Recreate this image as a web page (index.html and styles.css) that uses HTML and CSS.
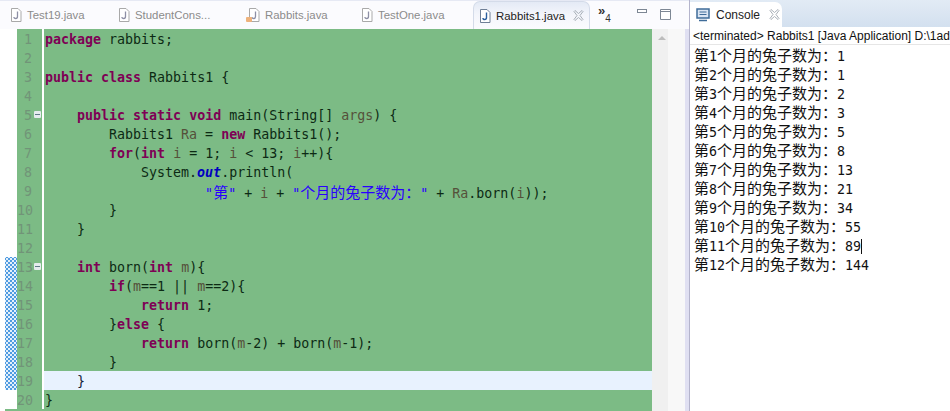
FILE: index.html
```html
<!DOCTYPE html>
<html lang="zh">
<head>
<meta charset="utf-8">
<title>Rabbits1.java</title>
<link rel="stylesheet" href="styles.css">
</head>
<body>
<svg class="defs" width="0" height="0" aria-hidden="true">
  <symbol id="jfile" viewBox="0 0 12 14">
    <path d="M1.5 .5h6.500l3 3v10h-9.500z" fill="#fff" stroke="#a9a9a9"/>
    <path d="M7.500 3.500v5q0 2-1.800 2t-1.700-1.500" fill="none" stroke="#8d8fa5" stroke-width="1.300"/>
  </symbol>
</svg>
<main class="workbench">
  <section class="editor-pane">
    <div class="tabbar">
      <div class="tab t1"><svg class="ficon"><use href="#jfile"/></svg>Test19.java</div>
      <div class="tab t2"><svg class="ficon"><use href="#jfile"/></svg>StudentCons...</div>
      <div class="tab t3"><span class="warnwrap"><svg class="ficon"><use href="#jfile"/></svg><span class="warndot"></span></span>Rabbits.java</div>
      <div class="tab t4"><svg class="ficon"><use href="#jfile"/></svg>TestOne.java</div>
      <div class="tab active">
        <svg class="ficon" viewBox="0 0 12 14"><path d="M1.500 .5h6.500l3 3v10h-9.500z" fill="#fff" stroke="#6f7f96"/><path d="M7.500 3.500v5q0 2-1.800 2t-1.700-1.500" fill="none" stroke="#2b5f9e" stroke-width="1.400"/></svg>
        <span class="tab-name">Rabbits1.java</span>
        <svg class="close" viewBox="0 0 11 11"><path d="M1 1.500l1-1 3.500 3 3.500-3 1 1-3 4 3 4-1 1-3.500-3-3.500 3-1-1 3-4z" fill="none" stroke="#a9b0b8"/></svg>
      </div>
      <div class="overflow"><span class="chev">»</span><span class="count">4</span></div>
      <div class="winbtns">
        <svg class="minbtn" viewBox="0 0 10 5"><rect x=".5" y=".5" width="9" height="3" fill="#fff" stroke="#7d8794"/></svg>
        <svg class="maxbtn" viewBox="0 0 11 11"><path d="M.5.5h10v10h-10zM.5 2.500h10" fill="#fff" stroke="#7d8794"/></svg>
      </div>
    </div>
    <div class="editor-body">
      <div class="code">
        <div class="row"><span class="mark"></span><span class="ln">1</span><pre class="src"><b>package</b> rabbits;</pre></div>
        <div class="row"><span class="mark"></span><span class="ln">2</span><pre class="src"></pre></div>
        <div class="row"><span class="mark"></span><span class="ln">3</span><pre class="src"><b>public</b> <b>class</b> Rabbits1 {</pre></div>
        <div class="row"><span class="mark"></span><span class="ln">4</span><pre class="src"></pre></div>
        <div class="row"><span class="mark"></span><span class="ln fold">5</span><pre class="src">    <b>public</b> <b>static</b> <b>void</b> main(String[] <i>args</i>) {</pre></div>
        <div class="row"><span class="mark"></span><span class="ln">6</span><pre class="src">        Rabbits1 <i>Ra</i> = <b>new</b> Rabbits1();</pre></div>
        <div class="row"><span class="mark"></span><span class="ln">7</span><pre class="src">        <b>for</b>(<b>int</b> <i>i</i> = 1; <i>i</i> &lt; 13; <i>i</i>++){</pre></div>
        <div class="row"><span class="mark"></span><span class="ln">8</span><pre class="src">            System.<em>out</em>.println(</pre></div>
        <div class="row"><span class="mark"></span><span class="ln">9</span><pre class="src">                    <s>"<span class="cjk">第</span>"</s> + <i>i</i> + <s>"<span class="cjk">个月的兔子数为：</span>"</s> + <i>Ra</i>.born(<i>i</i>));</pre></div>
        <div class="row"><span class="mark"></span><span class="ln">10</span><pre class="src">        }</pre></div>
        <div class="row"><span class="mark"></span><span class="ln">11</span><pre class="src">    }</pre></div>
        <div class="row"><span class="mark"></span><span class="ln">12</span><pre class="src"></pre></div>
        <div class="row"><span class="mark on"></span><span class="ln fold">13</span><pre class="src">    <b>int</b> born(<b>int</b> <i>m</i>){</pre></div>
        <div class="row"><span class="mark on"></span><span class="ln">14</span><pre class="src">        <b>if</b>(<i>m</i>==1 || <i>m</i>==2){</pre></div>
        <div class="row"><span class="mark on"></span><span class="ln">15</span><pre class="src">            <b>return</b> 1;</pre></div>
        <div class="row"><span class="mark on"></span><span class="ln">16</span><pre class="src">        }<b>else</b> {</pre></div>
        <div class="row"><span class="mark on"></span><span class="ln">17</span><pre class="src">            <b>return</b> born(<i>m</i>-2) + born(<i>m</i>-1);</pre></div>
        <div class="row"><span class="mark on"></span><span class="ln">18</span><pre class="src">        }</pre></div>
        <div class="row current"><span class="mark on"></span><span class="ln">19</span><pre class="src">    }</pre></div>
        <div class="row"><span class="mark"></span><span class="ln">20</span><pre class="src">}</pre></div>
      </div>
      <div class="scrollbar"><svg class="arrow" viewBox="0 0 8 4"><path d="M0 4l4-4 4 4z" fill="#bcbcbc"/></svg></div>
    </div>
  </section>
  <section class="console-pane">
    <div class="console-head">
      <div class="console-tab">
        <svg class="cicon" viewBox="0 0 14 14"><rect x="1" y="1" width="12" height="9" fill="#dbe6f3" stroke="#3f6c99" stroke-width="1.500"/><path d="M3.500 4h7M3.500 6.500h7" stroke="#3f6c99"/><path d="M3 12.500h8" stroke="#3f6c99" stroke-width="1.500"/></svg>
        <span>Console</span>
        <svg class="close" viewBox="0 0 11 11"><path d="M1 1.500l1-1 3.500 3 3.500-3 1 1-3 4 3 4-1 1-3.500-3-3.500 3-1-1 3-4z" fill="none" stroke="#a9b0b8"/></svg>
      </div>
    </div>
    <div class="status">&lt;terminated&gt; Rabbits1 [Java Application] D:\1ad</div>
    <div class="output">
      <div class="out"><span class="cjk">第</span>1<span class="cjk">个月的兔子数为：</span>1</div>
      <div class="out"><span class="cjk">第</span>2<span class="cjk">个月的兔子数为：</span>1</div>
      <div class="out"><span class="cjk">第</span>3<span class="cjk">个月的兔子数为：</span>2</div>
      <div class="out"><span class="cjk">第</span>4<span class="cjk">个月的兔子数为：</span>3</div>
      <div class="out"><span class="cjk">第</span>5<span class="cjk">个月的兔子数为：</span>5</div>
      <div class="out"><span class="cjk">第</span>6<span class="cjk">个月的兔子数为：</span>8</div>
      <div class="out"><span class="cjk">第</span>7<span class="cjk">个月的兔子数为：</span>13</div>
      <div class="out"><span class="cjk">第</span>8<span class="cjk">个月的兔子数为：</span>21</div>
      <div class="out"><span class="cjk">第</span>9<span class="cjk">个月的兔子数为：</span>34</div>
      <div class="out"><span class="cjk">第</span>10<span class="cjk">个月的兔子数为：</span>55</div>
      <div class="out"><span class="cjk">第</span>11<span class="cjk">个月的兔子数为：</span><span class="caret">89</span></div>
      <div class="out"><span class="cjk">第</span>12<span class="cjk">个月的兔子数为：</span>144</div>
    </div>
  </section>
</main>
</body>
</html>
```
FILE: styles.css
```css
* { box-sizing: border-box; }
html, body { margin: 0; height: 100%; overflow: hidden; background: #fff; }
.defs { position: absolute; }
.workbench { display: flex; width: 950px; height: 411px; }

.editor-pane {
  width: 690px; flex: none; display: flex; flex-direction: column;
  background: #fff; border-right: 1px solid #b4b4cc;
}
.tabbar {
  height: 29px; flex: none; display: flex; align-items: flex-start;
  padding-left: 10px; background: #fbfbfe; border-top: 1px solid #e6e9f4;
  font: 11.4px/28px "Liberation Sans", sans-serif; color: #8b8b8b;
}
.tab { display: flex; align-items: center; height: 28px; flex: none; white-space: nowrap; }
.t1 { width: 108px; }
.t2 { width: 130px; }
.t3 { width: 113px; }
.t4 { width: 112px; }
.ficon { width: 12px; height: 14px; margin-right: 5px; flex: none; display: block; }
.warnwrap { position: relative; }
.warndot {
  position: absolute; left: -2px; top: 9px; width: 6px; height: 5px;
  background: #eeb27c; border-radius: 1px;
}
.tab.active {
  width: 117px; padding-left: 5px; color: #222;
  background: linear-gradient(#e4eaf5, #f3f5fb 45%, #fbfbfe);
  border: 1px solid #d4dbe9; border-bottom: 0; border-radius: 7px 7px 0 0;
}
.tab-name { width: 73px; }
.close { width: 11px; height: 11px; margin-left: 4px; flex: none; }
.overflow { margin-left: 8px; width: 39px; font-family: "Liberation Sans", sans-serif; color: #333; display: flex; }
.chev { font-size: 13px; font-weight: bold; line-height: 19px; }
.count { font-size: 10px; line-height: 10px; margin-top: 13px; }
.winbtns { display: flex; align-items: flex-start; gap: 13px; padding-top: 8px; }
.minbtn { width: 10px; height: 5px; }
.maxbtn { width: 11px; height: 11px; }

.editor-body { flex: 1; min-height: 0; display: flex; padding-left: 5px; }
.code { width: 647px; flex: none; background: #7cbb85; }
.row { display: flex; height: 19px; }
.mark { width: 12px; flex: none; background: #fff; }
.mark.on {
  background: repeating-conic-gradient(#4f9be0 0 25%, #e4f0fc 0 50%) 0 0 / 4px 4px fixed;
}
.ln {
  width: 25px; flex: none; padding: 1px 10px 0 0; position: relative; text-align: right;
  font: 13.3px/19px "DejaVu Sans Mono", monospace; color: #719478;
}
.fold::after {
  content: ""; position: absolute; left: 17px; top: 6px; width: 7px; height: 7px;
  border-radius: 1px;
  background: linear-gradient(#5f7a86, #5f7a86) center / 5px 1px no-repeat, #e4ecee;
}
.src {
  flex: 1; margin: 0; padding: 1px 0 0 1px; height: 19px; border-left: 2px solid #fff;
  font: 13.3px/19px "DejaVu Sans Mono", monospace; color: #0c2a14;
}
.src b { color: #7f0055; font-weight: bold; }
.src i { color: #55503a; font-style: normal; }
.src s { color: #2a00ff; text-decoration: none; }
.src em { color: #0000c0; font-weight: bold; font-style: italic; }
.current .src { background: #e8f2fe; color: #14213a; }
.scrollbar { flex: 1; background: linear-gradient(90deg, #f0f0f0 16px, #f8f8f8 16px); padding: 7px 0 0 6px; border-right: 4px solid #e0e0f2; }
.arrow { display: block; width: 8px; height: 4px; }

.cjk { font: 15px/19px "Noto Sans CJK SC", sans-serif; }

.console-pane { flex: 1; min-width: 0; display: flex; flex-direction: column; overflow: hidden; }
.console-head { height: 27px; flex: none; padding-top: 2px; background: linear-gradient(#e2ebf5, #d3e0ef); }
.console-tab {
  width: 92px; height: 25px; display: flex; align-items: center; gap: 6px; padding-left: 6px;
  background: #fff; border-radius: 0 7px 0 0;
  font: 12px "Liberation Sans", sans-serif; color: #222;
}
.console-tab .close { margin-left: 3px; }
.cicon { width: 14px; height: 14px; flex: none; }
.status {
  height: 18px; flex: none; padding-left: 3px; white-space: nowrap; border-bottom: 1px solid #e6e6e6;
  font: 12px/19px "Liberation Sans", sans-serif; color: #111;
}
.output { padding-left: 4px; }
.out { height: 19px; white-space: nowrap; font: 13.3px/19px "DejaVu Sans Mono", monospace; color: #111; }
.caret { border-right: 1px solid #111; }
```
